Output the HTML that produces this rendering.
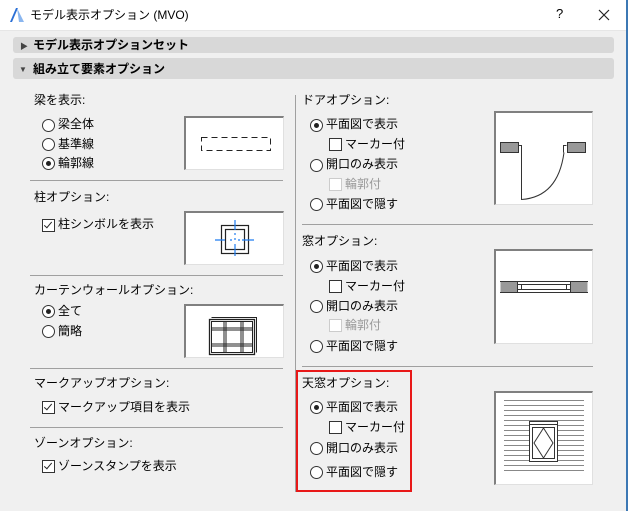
<!DOCTYPE html>
<html><head><meta charset="utf-8"><style>
body{margin:0;width:628px;height:511px;overflow:hidden;background:#f0f0f0;font-family:"Liberation Sans","Noto Sans CJK JP",sans-serif;font-size:12px;color:#000;position:relative}
.a{position:absolute;white-space:nowrap;line-height:14px}
.t{position:absolute;left:0;top:0;width:626px;height:30px;background:#fff;border-bottom:1px solid #e6e6e6}
.hb{position:absolute;left:13px;width:601px;background:#d8d8d8;border-radius:3px;font-weight:bold;font-size:12px}
.r{position:absolute;width:11px;height:11px;border:1px solid #333;border-radius:50%;background:#fff}
.r.on::after{content:"";position:absolute;left:3px;top:3px;width:5px;height:5px;border-radius:50%;background:#222}
.c{position:absolute;width:11px;height:11px;border:1px solid #333;background:#fff}
.c.dis{border-color:#ccc}
.c.on::after{content:"";position:absolute;left:3px;top:0px;width:3px;height:7px;border:solid #222;border-width:0 1.5px 1.5px 0;transform:rotate(40deg)}
.box{position:absolute;background:#fff;border-top:2px solid #808080;border-left:2px solid #808080;border-right:1px solid #e0e0e0;border-bottom:1px solid #e0e0e0}
.sep{position:absolute;height:1px;background:#a0a0a0}
</style></head><body>
<div class="t"></div>
<svg class="a" style="left:9px;top:7px" width="16" height="16"><path d="M1 15 L7 1 L9 1 L3 15Z" fill="#2a6fd6"/><path d="M8 1 L15 15 L10 15 Z" fill="#8ab6ef"/></svg>
<div class="a" style="left:30px;top:8px;font-size:12px">モデル表示オプション (MVO)</div>
<div class="a" style="left:556px;top:7px;font-size:13px">?</div>
<svg class="a" style="left:598px;top:9px" width="12" height="12"><path d="M1 1L11 11M11 1L1 11" stroke="#222" stroke-width="1.2"/></svg>
<div style="position:absolute;left:626px;top:0;width:2px;height:511px;background:#3c78b4"></div>

<div class="hb" style="top:37px;height:16px"></div>
<div class="a" style="left:20px;top:40px;font-size:8px;color:#444">▶</div>
<div class="a" style="left:33px;top:38px;font-weight:bold">モデル表示オプションセット</div>
<div class="hb" style="top:58px;height:21px"></div>
<div class="a" style="left:19px;top:63px;font-size:8px;color:#444">▼</div>
<div class="a" style="left:33px;top:62px;font-weight:bold">組み立て要素オプション</div>

<div style="position:absolute;left:295px;top:95px;width:1px;height:397px;background:#a0a0a0"></div>

<!-- left column -->
<div class="a" style="left:34px;top:93px">梁を表示:</div>
<div class="r" style="left:42px;top:119px"></div><div class="a" style="left:58px;top:117px">梁全体</div>
<div class="r" style="left:42px;top:138px"></div><div class="a" style="left:58px;top:137px">基準線</div>
<div class="r on" style="left:42px;top:157px"></div><div class="a" style="left:58px;top:156px">輪郭線</div>
<div class="box" style="left:184px;top:116px;width:97px;height:51px"><svg width="97" height="51"><rect x="15.5" y="19.5" width="69" height="13" fill="none" stroke="#222" stroke-dasharray="6,4"/></svg></div>
<div class="sep" style="left:30px;top:180px;width:253px"></div>

<div class="a" style="left:34px;top:190px">柱オプション:</div>
<div class="c on" style="left:42px;top:219px"></div><div class="a" style="left:58px;top:217px">柱シンボルを表示</div>
<div class="box" style="left:184px;top:211px;width:97px;height:51px"><svg width="97" height="51"><rect x="35.5" y="12.5" width="27" height="28" fill="none" stroke="#222" stroke-width="1.2"/><rect x="39.5" y="16.5" width="19" height="20" fill="none" stroke="#222" stroke-width="1.2"/><path d="M49 7v10M49 20v2M49 25v2M49 31v12M29 27h10M44 27h2M52 27h2M56 27h12" stroke="#1e7cf0" stroke-width="1.2"/></svg></div>
<div class="sep" style="left:30px;top:275px;width:253px"></div>

<div class="a" style="left:34px;top:283px">カーテンウォールオプション:</div>
<div class="r on" style="left:42px;top:305px"></div><div class="a" style="left:58px;top:304px">全て</div>
<div class="r" style="left:42px;top:325px"></div><div class="a" style="left:58px;top:324px">簡略</div>
<div class="box" style="left:184px;top:304px;width:97px;height:51px"><svg width="97" height="51"><path d="M25.5 11.5h45v35" fill="none" stroke="#222"/><rect x="23.5" y="13.5" width="45" height="35" fill="#fff" stroke="#222" stroke-width="1.3"/><rect x="25.5" y="15.5" width="41" height="31" fill="none" stroke="#222"/><path d="M38 15v31M40 15v31M55 15v31M57 15v31M25 22h41M25 24h41M25 38h41M25 40h41" stroke="#222"/></svg></div>
<div class="sep" style="left:30px;top:368px;width:253px"></div>

<div class="a" style="left:34px;top:376px">マークアップオプション:</div>
<div class="c on" style="left:42px;top:401px"></div><div class="a" style="left:58px;top:400px">マークアップ項目を表示</div>
<div class="sep" style="left:30px;top:427px;width:253px"></div>
<div class="a" style="left:34px;top:436px">ゾーンオプション:</div>
<div class="c on" style="left:42px;top:460px"></div><div class="a" style="left:58px;top:459px">ゾーンスタンプを表示</div>

<!-- right column -->
<div class="a" style="left:302px;top:93px">ドアオプション:</div>
<div class="r on" style="left:310px;top:119px"></div><div class="a" style="left:326px;top:117px">平面図で表示</div>
<div class="c" style="left:329px;top:138px"></div><div class="a" style="left:345px;top:137px">マーカー付</div>
<div class="r" style="left:310px;top:159px"></div><div class="a" style="left:326px;top:157px">開口のみ表示</div>
<div class="c dis" style="left:329px;top:178px"></div><div class="a" style="left:345px;top:177px;color:#999">輪郭付</div>
<div class="r" style="left:310px;top:198px"></div><div class="a" style="left:326px;top:197px">平面図で隠す</div>
<div class="box" style="left:494px;top:111px;width:96px;height:91px"><svg width="96" height="91"><rect x="4.5" y="29.5" width="18" height="10" fill="#999" stroke="#333"/><rect x="71.5" y="29.5" width="18" height="10" fill="#999" stroke="#333"/><path d="M22.5 32.5h3v7M70.5 32.5h-3v7M25.5 32.5V86.5Q62 84 68 39.5" fill="none" stroke="#333"/></svg></div>
<div class="sep" style="left:302px;top:224px;width:291px"></div>

<div class="a" style="left:302px;top:234px">窓オプション:</div>
<div class="r on" style="left:310px;top:260px"></div><div class="a" style="left:326px;top:259px">平面図で表示</div>
<div class="c" style="left:329px;top:280px"></div><div class="a" style="left:345px;top:279px">マーカー付</div>
<div class="r" style="left:310px;top:300px"></div><div class="a" style="left:326px;top:299px">開口のみ表示</div>
<div class="c dis" style="left:329px;top:319px"></div><div class="a" style="left:345px;top:318px;color:#999">輪郭付</div>
<div class="r" style="left:310px;top:340px"></div><div class="a" style="left:326px;top:339px">平面図で隠す</div>
<div class="box" style="left:494px;top:249px;width:96px;height:92px"><svg width="96" height="92"><rect x="4.5" y="30.5" width="17" height="11" fill="#999"/><rect x="74.5" y="30.5" width="17" height="11" fill="#999"/><path d="M4 30.5h88M4 41.5h88M21.5 30v12M74.5 30v12M21 33.5h54M21 38.5h54M25.5 33v6M70.5 33v6" stroke="#333" fill="none"/></svg></div>
<div class="sep" style="left:302px;top:366px;width:291px"></div>

<div style="position:absolute;left:296px;top:370px;width:112px;height:118px;border:2px solid #e81818"></div>
<div class="a" style="left:302px;top:376px">天窓オプション:</div>
<div class="r on" style="left:310px;top:401px"></div><div class="a" style="left:326px;top:400px">平面図で表示</div>
<div class="c" style="left:329px;top:421px"></div><div class="a" style="left:345px;top:420px">マーカー付</div>
<div class="r" style="left:310px;top:442px"></div><div class="a" style="left:326px;top:441px">開口のみ表示</div>
<div class="r" style="left:310px;top:466px"></div><div class="a" style="left:326px;top:465px">平面図で隠す</div>
<div class="box" style="left:494px;top:391px;width:96px;height:91px"><svg width="96" height="91">
<g stroke="#888"><path d="M8 7.5h80M8 12.5h80M8 17.5h80M8 22.5h80M8 27.5h80M8 32.5h80M8 37.5h80M8 42.5h80M8 47.5h80M8 52.5h80M8 57.5h80M8 62.5h80M8 67.5h80M8 72.5h80M8 77.5h80"/></g>
<rect x="33.5" y="28.5" width="28" height="40" fill="#fff" stroke="#333"/><path d="M33 31.5h29" stroke="#333"/><rect x="36.5" y="34.5" width="22" height="31" fill="#fff" stroke="#333"/><path d="M47.5 35L57 50L47.5 65L38 50Z" fill="none" stroke="#333"/></svg></div>
</body></html>
